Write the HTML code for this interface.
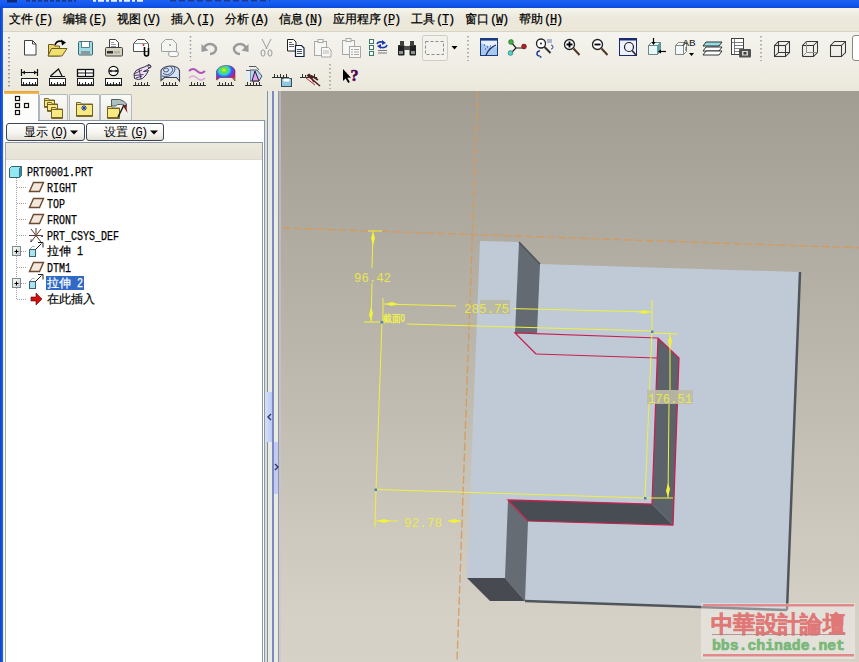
<!DOCTYPE html>
<html><head><meta charset="utf-8">
<style>
*{margin:0;padding:0;box-sizing:border-box}
html,body{width:859px;height:662px;overflow:hidden;background:#ece9d8;font-family:"Liberation Sans",sans-serif;}
.abs{position:absolute}
#title{left:0;top:0;width:859px;height:8px;background:linear-gradient(#1e62f2,#1258ee 60%,#0c4ad8);}
#lborder{left:0;top:8px;width:3px;height:654px;background:linear-gradient(90deg,#0a3fc4,#1858e0 60%,#2a64d8);}
#menubar{left:3px;top:8px;width:856px;height:24px;background:linear-gradient(#f6f5ee,#ece9dc 40%,#ebe8da);border-bottom:1px solid #d8d4c4;}
.mi{position:absolute;top:4px;font-size:12px;line-height:14px;color:#000;white-space:nowrap;-webkit-text-stroke:0.25px #000}
.mi u{text-decoration:underline}
.mi .hk{font-family:"Liberation Mono",monospace;font-size:12px;letter-spacing:-1.2px;margin-left:1px}
#toolbar{left:3px;top:32px;width:856px;height:59px;background:linear-gradient(#f4f3ed,#f0eee6 50%,#ebe8db);}
#viewport{left:278px;top:91px;width:581px;height:571px;background:linear-gradient(#a19d92,#d4d0c5 91%,#d6d2c7);}
#panel{left:4px;top:91px;width:274px;height:571px;background:#ece9d8;}
</style></head>
<body>
<div id="title" class="abs"></div>
<div id="lborder" class="abs"></div>
<svg class="abs tfrag" style="left:0;top:0" width="300" height="8"><rect x="7" y="0" width="10" height="2.5" fill="#0c2a78"/><path d="M26,0.8 h50" stroke="#1a3a90" stroke-width="2" stroke-dasharray="4,2"/><path d="M93,0.8 h50" stroke="#e8f0ff" stroke-width="1.8" stroke-dasharray="3,2,6,2"/><path d="M170,0.8 h100" stroke="#1a3a90" stroke-width="1.6" stroke-dasharray="6,3"/></svg>
<div id="menubar" class="abs">
 <span class="mi" style="left:6px">文件<span class="hk">(<u>F</u>)</span></span>
 <span class="mi" style="left:60px">编辑<span class="hk">(<u>E</u>)</span></span>
 <span class="mi" style="left:114px">视图<span class="hk">(<u>V</u>)</span></span>
 <span class="mi" style="left:168px">插入<span class="hk">(<u>I</u>)</span></span>
 <span class="mi" style="left:222px">分析<span class="hk">(<u>A</u>)</span></span>
 <span class="mi" style="left:276px">信息<span class="hk">(<u>N</u>)</span></span>
 <span class="mi" style="left:330px">应用程序<span class="hk">(<u>P</u>)</span></span>
 <span class="mi" style="left:408px">工具<span class="hk">(<u>T</u>)</span></span>
 <span class="mi" style="left:462px">窗口<span class="hk">(<u>W</u>)</span></span>
 <span class="mi" style="left:516px">帮助<span class="hk">(<u>H</u>)</span></span>
</div>
<div id="toolbar" class="abs"></div>
<div id="panel" class="abs"></div>
<div id="viewport" class="abs"></div>
<svg class="abs" style="left:0;top:0" width="859" height="92" viewBox="0 0 859 92"><path d="M9,37 v50" stroke="#8a8a8a" stroke-width="1.6" stroke-dasharray="1.6,2.4"/><path d="M190.5,36 V61" stroke="#9a9a9a" stroke-width="1.5" stroke-dasharray="1.5,2.5"/><path d="M468,36 V61" stroke="#9a9a9a" stroke-width="1.5" stroke-dasharray="1.5,2.5"/><path d="M761,36 V61" stroke="#9a9a9a" stroke-width="1.5" stroke-dasharray="1.5,2.5"/><path d="M330,64 V89" stroke="#9a9a9a" stroke-width="1.5" stroke-dasharray="1.5,2.5"/><path d="M24.5,40.5 h8 l3.5,3.5 v11 h-11.5z" fill="#fff" stroke="#404040"/><path d="M32.5,40.5 v3.5 h3.5" fill="none" stroke="#404040"/><path d="M48.5,44.5 h5 l1,1.5 h5 v10 h-11z" fill="#e8d468" stroke="#6a5a20"/><path d="M51.5,48.5 h15.5 l-5,7.5 h-14z" fill="#f0e070" stroke="#6a5a20"/><path d="M55,45 q2,-5 7,-3.5" fill="none" stroke="#000" stroke-width="1.6"/><path d="M61,39.5 l5,3 l-4,3z" fill="#000"/><rect x="78.5" y="41.5" width="14" height="13.5" fill="#9edce6" stroke="#3a6a70" rx="1"/><rect x="81.5" y="41.5" width="8" height="6" fill="#fff" stroke="#3a6a70" stroke-width="0.8"/><rect x="81" y="51" width="9" height="4" fill="#8a9a9a"/><path d="M109.5,39.5 h6 l3,3 v6 h-9z" fill="#fff" stroke="#404040"/><path d="M111,42.5 h3 M111,44.5 h5 M111,46.5 h5" stroke="#505050" stroke-width="0.6"/><rect x="105.5" y="47.5" width="17" height="8.5" fill="#d6d2c2" stroke="#404040" rx="1"/><rect x="107" y="51" width="6" height="2.5" fill="#303030"/><rect x="114" y="51" width="6" height="2.5" fill="#b8b4a4"/><path d="M133.5,43.5 l4,-4 h7 l4,4 v8 h-15z" fill="#fff" stroke="#505050"/><path d="M133.5,43.5 h15" stroke="#909090"/><circle cx="143.5" cy="45" r="1" fill="#d02020"/><path d="M144.5,47 v7 a2,2 0 0 0 4,0 v-6" fill="none" stroke="#000" stroke-width="1.6"/><path d="M161.5,43.5 l4,-4 h7 l4,4 v8 h-15z" fill="#f4f4f0" stroke="#a0a0a0"/><circle cx="170" cy="45" r="1" fill="#a0a0a0"/><rect x="168.5" y="51.5" width="10" height="5" rx="2.5" fill="#fafafa" stroke="#a0a0a0"/><path d="M204,49 a6,5 0 1 1 6,5" fill="none" stroke="#9a9a9a" stroke-width="2.5"/><path d="M201.5,44 l0,8 l7,-1.5z" fill="#9a9a9a"/><path d="M246,49 a6,5 0 1 0 -6,5" fill="none" stroke="#9a9a9a" stroke-width="2.5"/><path d="M248.5,44 l0,8 l-7,-1.5z" fill="#9a9a9a"/><path d="M262,39 l5,10 M271,39 l-5,10" stroke="#9a9a9a" stroke-width="1"/><ellipse cx="263" cy="53" rx="2" ry="3.2" fill="none" stroke="#9a9a9a"/><ellipse cx="270" cy="53" rx="2" ry="3.2" fill="none" stroke="#9a9a9a"/><path d="M287.5,39.5 h6 l2.5,2.5 v9 h-8.5z" fill="#fff" stroke="#202020"/><path d="M289,42.5 h3 M289,44.5 h5 M289,46.5 h5" stroke="#202020" stroke-width="0.7"/><path d="M295.5,45.5 h6 l2.5,2.5 v8.5 h-8.5z" fill="#fff" stroke="#102040" stroke-width="1.2"/><path d="M297,49.5 h5 M297,51.5 h5 M297,53.5 h5" stroke="#102040" stroke-width="0.8"/><rect x="314.5" y="41.5" width="12" height="14" fill="#f6f6f2" stroke="#a8a8a8"/><rect x="318" y="39.5" width="5" height="3" fill="#f6f6f2" stroke="#a8a8a8"/><path d="M321.5,47.5 h7 l2.5,2.5 v7 h-9.5z" fill="#f8f8f4" stroke="#a8a8a8"/><path d="M323,51 h6 M323,53 h6" stroke="#a8a8a8" stroke-width="0.8"/><rect x="342.5" y="40.5" width="12" height="14" fill="#f6f6f2" stroke="#a8a8a8"/><rect x="346" y="38.5" width="5" height="3" fill="#f6f6f2" stroke="#a8a8a8"/><rect x="349.5" y="46.5" width="11" height="11" fill="#f8f8f4" stroke="#a8a8a8"/><path d="M351,49.5 h2 M354,49.5 h5 M351,52 h2 M354,52 h5 M351,54.5 h2 M354,54.5 h5" stroke="#a8a8a8" stroke-width="1"/><rect x="369.5" y="39.5" width="4" height="4" fill="#fff" stroke="#3a7a6a"/><rect x="369.5" y="45.5" width="4" height="4" fill="#fff" stroke="#3a7a6a"/><rect x="369.5" y="51.5" width="4" height="4" fill="#fff" stroke="#3a7a6a"/><path d="M377,44 a4,3 0 0 1 7,-1" fill="none" stroke="#1a3ab0" stroke-width="1.6"/><path d="M382,40 l4,3 l-4,2z" fill="#1a3ab0"/><path d="M387,45 a4,3 0 0 1 -7,1.5" fill="none" stroke="#1a3ab0" stroke-width="1.6"/><path d="M381,49 l-4,-3 l4,-2z" fill="#1a3ab0"/><path d="M378,50.5 h9 M378,53 h9" stroke="#6a6a6a" stroke-width="0.9"/><rect x="398" y="45" width="6.5" height="10.5" rx="1" fill="#202020"/><rect x="409.5" y="45" width="6.5" height="10.5" rx="1" fill="#202020"/><rect x="400" y="41" width="4" height="5" fill="#404040"/><rect x="410" y="41" width="4" height="5" fill="#404040"/><rect x="404" y="46" width="6" height="4" fill="#505050"/><rect x="399" y="51" width="4" height="3" fill="#909090"/><rect x="411" y="51" width="4" height="3" fill="#909090"/><rect x="422.5" y="35.5" width="25" height="25" rx="2" fill="#f3f2ec" stroke="#cfccc0"/><rect x="425.5" y="41.5" width="18" height="13" fill="none" stroke="#8a8a8a" stroke-width="1" stroke-dasharray="3,2"/><path d="M451.5,46 h6 l-3,3.5z" fill="#000"/><rect x="480.5" y="38.5" width="17" height="17" fill="#a8c8f0" stroke="#1a3a80"/><rect x="480" y="38" width="18" height="2.5" fill="#1a3a80"/><path d="M481,41 h16 v6 q-6,1 -16,-4z" fill="#e8f0ff"/><path d="M486,55 q3,-7 10,-10" fill="none" stroke="#1a2a60" stroke-width="1.3"/><path d="M484,45 h1 M487,47 h1 M485,49 h1 M489,49 h1 M490,46 h1" stroke="#304070" stroke-width="1"/><path d="M511,42 l5,6 h9 M511,53 l5,-5" fill="none" stroke="#202020" stroke-width="1.2"/><circle cx="511" cy="42" r="2.4" fill="#40b040" stroke="#206020" stroke-width="0.6"/><circle cx="510.5" cy="53" r="2.4" fill="#50d0c8" stroke="#207070" stroke-width="0.6"/><circle cx="524" cy="46.5" r="2.4" fill="#b02020" stroke="#601010" stroke-width="0.6"/><circle cx="541" cy="43.5" r="4.5" fill="#fff" stroke="#202020" stroke-width="1.3"/><circle cx="541" cy="43.5" r="1" fill="#202020"/><path d="M544.5,47 l6,6" stroke="#303030" stroke-width="2"/><path d="M547,40 h5 M547,42 h5" stroke="#4060a0" stroke-width="0.8"/><path d="M551,45 a2,2 0 0 1 0,4" fill="none" stroke="#304080" stroke-width="1"/><path d="M539,56 a2.5,2.5 0 0 1 1,-5" fill="none" stroke="#1a3090" stroke-width="1.4"/><path d="M539,55 l3,2 l-2,1z" fill="#1a3090"/><circle cx="569.5" cy="44.5" r="5" fill="#fff" stroke="#202020" stroke-width="1.3"/><path d="M566.5,44.5 h6 M569.5,41.5 v6" stroke="#000" stroke-width="1.8"/><path d="M573.5,48.5 l6,6.5" stroke="#503828" stroke-width="2"/><circle cx="597.5" cy="44.5" r="5" fill="#fff" stroke="#202020" stroke-width="1.3"/><path d="M594.5,44.5 h6" stroke="#000" stroke-width="1.8"/><path d="M601.5,48.5 l6,6.5" stroke="#503828" stroke-width="2"/><rect x="619.5" y="38.5" width="17" height="17" fill="#eef2ff" stroke="#1a2a70"/><rect x="619" y="38" width="18" height="2.5" fill="#1a2a70"/><circle cx="629" cy="47" r="4.5" fill="none" stroke="#202020" stroke-width="1.2"/><path d="M632,50.5 l4,4.5" stroke="#303030" stroke-width="1.8"/><path d="M648.5,45.5 l3,-3 h9 v9 l-3,3 h-9z" fill="#e8f8f8" stroke="#506868" stroke-width="0.8"/><path d="M648.5,45.5 h9 v9 M657.5,45.5 l3,-3" fill="none" stroke="#506868" stroke-width="0.8"/><path d="M657.5,45.5 l3,-3 v9 l-3,3z" fill="#58a8a8"/><path d="M653.5,38 v6" stroke="#000" stroke-width="1.2"/><path d="M651.5,42 l2,3 l2,-3z" fill="#000"/><path d="M666,51.5 h-6" stroke="#000" stroke-width="1.2"/><path d="M661,49.5 l-3,2 l3,2z" fill="#000"/><path d="M675.5,45.5 l3,-3 h8 v9 l-3,3 h-8z" fill="#f4f8f8" stroke="#607070" stroke-width="0.8"/><path d="M675.5,45.5 h8 v9 M683.5,45.5 l3,-3" fill="none" stroke="#607070" stroke-width="0.8"/><text x="682.5" y="46" font-family="Liberation Mono, monospace" font-size="9.5" fill="#202020" textLength="13" lengthAdjust="spacingAndGlyphs">AB</text><path d="M689,53 h5 l-2.5,3z" fill="#000"/><path d="M686,47 v4" stroke="#606060"/><path d="M706,42 h16 l-3,4 h-16z" fill="#90e0e8" stroke="#202020" stroke-width="0.9"/><path d="M706,47 h16 l-3,4 h-16z" fill="#fff" stroke="#202020" stroke-width="0.9"/><path d="M706,51 h16 l-3,4 h-16z" fill="#fff" stroke="#202020" stroke-width="0.9"/><rect x="731.5" y="38.5" width="12" height="16" fill="#fff" stroke="#404040"/><path d="M731.5,42.5 h12 M734.5,38.5 v16 M734,45.5 h9 M734,48.5 h9 M734,51.5 h9" stroke="#606060" stroke-width="0.8"/><rect x="739" y="49" width="12" height="8.5" rx="1" fill="#505050"/><rect x="742" y="51" width="6" height="4.5" fill="#d8d8d8"/><rect x="743.5" y="52" width="3" height="2.5" fill="#404040"/><g fill="none" stroke="#383838" stroke-width="1.05"><rect x="774.5" y="45.5" width="11" height="11"/><path d="M774.5,45.5 l4,-4 h11 v11 l-4,4 M785.5,45.5 l4,-4"/><path d="M778.5,41.5 v11 h11 M778.5,52.5 l-4,4"/></g><g fill="none" stroke="#383838" stroke-width="1.05"><rect x="802.5" y="45.5" width="11" height="11"/><path d="M802.5,45.5 l4,-4 h11 v11 l-4,4 M813.5,45.5 l4,-4"/><path d="M806.5,41.5 v11 h11 M806.5,52.5 l-4,4" stroke="#909090" stroke-width="1"/></g><g fill="none" stroke="#383838" stroke-width="1.05"><rect x="830.5" y="45.5" width="11" height="11"/><path d="M830.5,45.5 l4,-4 h11 v11 l-4,4 M841.5,45.5 l4,-4"/></g><rect x="852.5" y="35.5" width="12" height="25" rx="2.5" fill="#fff" stroke="#8a8a80"/><path d="M21.5,69 v7 M37.5,69 v7 M22,72.5 h15" stroke="#101010" stroke-width="1.2" fill="none"/><path d="M22,72.5 l3,-2 v4z M37,72.5 l-3,-2 v4z" fill="#101010"/><rect x="21.5" y="78.5" width="16" height="7" fill="#ffffff" stroke="#202020" stroke-width="1"/><path d="M22,85 h16" stroke="#202020" stroke-width="1.5"/><path d="M23.5,85 v-3 M26.5,85 v-2 M29.5,85 v-3 M32.5,85 v-2 M35.5,85 v-3 " stroke="#202020" stroke-width="1"/><path d="M50,76.5 h15 M50.5,76 l8,-7 l3.5,7" stroke="#101010" stroke-width="1.2" fill="none"/><rect x="49.5" y="78.5" width="16" height="7" fill="#ffffff" stroke="#202020" stroke-width="1"/><path d="M50,85 h16" stroke="#202020" stroke-width="1.5"/><path d="M51.5,85 v-3 M54.5,85 v-2 M57.5,85 v-3 M60.5,85 v-2 M63.5,85 v-3 " stroke="#202020" stroke-width="1"/><rect x="77.5" y="69.5" width="16" height="7" fill="#fff" stroke="#101010" stroke-width="1.3"/><path d="M85.5,69.5 v7 M78,73 h15" stroke="#101010" stroke-width="1"/><rect x="77.5" y="78.5" width="16" height="7" fill="#ffffff" stroke="#202020" stroke-width="1"/><path d="M78,85 h16" stroke="#202020" stroke-width="1.5"/><path d="M79.5,85 v-3 M82.5,85 v-2 M85.5,85 v-3 M88.5,85 v-2 M91.5,85 v-3 " stroke="#202020" stroke-width="1"/><circle cx="113.5" cy="71" r="4.6" fill="#fff" stroke="#101010" stroke-width="1.3"/><path d="M109,71 h9" stroke="#101010" stroke-width="1.2"/><path d="M109.5,71 l2,-1.5 v3z M117.5,71 l-2,-1.5 v3z" fill="#101010"/><rect x="105.5" y="78.5" width="16" height="7" fill="#ffffff" stroke="#202020" stroke-width="1"/><path d="M106,85 h16" stroke="#202020" stroke-width="1.5"/><path d="M107.5,85 v-3 M110.5,85 v-2 M113.5,85 v-3 M116.5,85 v-2 M119.5,85 v-3 " stroke="#202020" stroke-width="1"/><path d="M134,74 q1,-4 6,-5.5 q5,-1.5 9,-4 l1.5,2 q-3,4 -7,5 q3,0 5,-1 q-2,5 -6,8 q-4,2 -8,0z" fill="#f4dcf4" stroke="#1e2040" stroke-width="0.9"/><path d="M134,74 l8,-4 M134.5,75.5 l9,-1 M136,78 l6,-2 M139,69 l2,10" fill="none" stroke="#1e2040" stroke-width="0.8"/><circle cx="149.5" cy="66.5" r="1.5" fill="none" stroke="#1e2040" stroke-width="0.8"/><path d="M133,85.5 h17" stroke="#303030" stroke-width="1"/><path d="M135.5,85 v-3 M138.5,85 v-2 M141.5,85 v-3 M144.5,85 v-2 M147.5,85 v-3 " stroke="#303030" stroke-width="1"/><path d="M161,80.5 v-10 q2,-4 9,-4.5 q8,0 9.5,4.5 v10.5 l-3,-3.5 h-12z" fill="#d4e2f8" stroke="#3a4250" stroke-width="1.1"/><ellipse cx="166" cy="70" rx="2.5" ry="2" fill="none" stroke="#3a4a70" stroke-width="0.9"/><path d="M163,73 q4,4 9,-1 q2,-3 -1,-5 M162,76 q8,2 12,-4 q2,-3 0,-5.5" fill="none" stroke="#3a4a70" stroke-width="0.9"/><path d="M161,85.5 h17" stroke="#303030" stroke-width="1"/><path d="M163.5,85 v-3 M166.5,85 v-2 M169.5,85 v-3 M172.5,85 v-2 M175.5,85 v-3 " stroke="#303030" stroke-width="1"/><path d="M189,71 q4,-4 8,0 t8,0" fill="none" stroke="#b050c0" stroke-width="1.8"/><path d="M189,78 q4,-4 8,0 t8,0" fill="none" stroke="#d8a8e0" stroke-width="1.5"/><path d="M189,85.5 h17" stroke="#303030" stroke-width="1"/><path d="M191.5,85 v-3 M194.5,85 v-2 M197.5,85 v-3 M200.5,85 v-2 M203.5,85 v-3 " stroke="#303030" stroke-width="1"/><defs><radialGradient id="rb" cx="0.4" cy="0.3" r="0.85"><stop offset="0" stop-color="#f0f020"/><stop offset="0.18" stop-color="#60e040"/><stop offset="0.35" stop-color="#30d0e0"/><stop offset="0.5" stop-color="#3060f0"/><stop offset="0.65" stop-color="#a020d0"/><stop offset="0.8" stop-color="#e02030"/><stop offset="1" stop-color="#f0a020"/></radialGradient></defs><path d="M216.5,80 v-9 q2,-5 9,-5.5 q8,0 9.5,5 v10.5 l-3,-3.5 h-12z" fill="url(#rb)" stroke="#503050" stroke-width="0.6"/><path d="M217,85.5 h17" stroke="#303030" stroke-width="1"/><path d="M219.5,85 v-3 M222.5,85 v-2 M225.5,85 v-3 M228.5,85 v-2 M231.5,85 v-3 " stroke="#303030" stroke-width="1"/><path d="M250,70 h7 l5,6 l-3,5 h-9z" fill="#b8d4f0" stroke="#404858" stroke-width="0.9"/><rect x="247" y="70" width="3" height="11" fill="#e0f0f8"/><path d="M252,81 l3,-10 l4,10z" fill="#e8a0f0" stroke="#202030" stroke-width="1"/><path d="M249,66.5 h7 l3,3.5 M246,70.5 h4" fill="none" stroke="#404858" stroke-width="0.9"/><path d="M245,85.5 h17" stroke="#303030" stroke-width="1"/><path d="M247.5,85 v-3 M250.5,85 v-2 M253.5,85 v-3 M256.5,85 v-2 M259.5,85 v-3 " stroke="#303030" stroke-width="1"/><path d="M272,77.5 h17" stroke="#303030" stroke-width="1"/><path d="M274.5,77 v-3 M277.5,77 v-2 M280.5,77 v-3 M283.5,77 v-2 M286.5,77 v-3 " stroke="#303030" stroke-width="1"/><rect x="281.5" y="78.5" width="10" height="8" fill="#90c8e0" stroke="#305060"/><rect x="283.5" y="78.5" width="6" height="3" fill="#fff"/><path d="M300,77.5 h17" stroke="#303030" stroke-width="1"/><path d="M302.5,77 v-3 M305.5,77 v-2 M308.5,77 v-3 M311.5,77 v-2 M314.5,77 v-3 " stroke="#303030" stroke-width="1"/><path d="M307,75 l13,11 M309,74 l5,8 M312,76 l6,4" stroke="#502020" stroke-width="1.6"/><path d="M306,78 l9,7" stroke="#c02040" stroke-width="1"/><path d="M343,69 v12 l2.6,-2.6 l2.6,4.6 l1.6,-0.9 l-2.5,-4.4 h3.7z" fill="#000"/><text x="350.5" y="81" font-family="Liberation Serif, serif" font-size="16" font-weight="bold" fill="#480048" stroke="#480048" stroke-width="0.5">?</text></svg>
<div class="abs" style="left:4px;top:91px;width:274px;height:571px;background:#ece9d8"></div>
<div class="abs" style="left:3px;top:91px;width:36px;height:30px;background:#fcfcfa;border-right:1px solid #a8b4c0;"></div>
<div class="abs" style="left:4px;top:91px;width:35px;height:3px;background:linear-gradient(#e8a030,#f0c060)"></div>
<div class="abs" style="left:39px;top:94px;width:29px;height:26px;background:linear-gradient(#fafaf7,#ecebe4);border:1px solid #b0b8c0;border-bottom:none;border-radius:2px 2px 0 0"></div>
<div class="abs" style="left:69px;top:94px;width:31px;height:26px;background:linear-gradient(#fafaf7,#ecebe4);border:1px solid #b0b8c0;border-bottom:none;border-radius:2px 2px 0 0"></div>
<div class="abs" style="left:100px;top:94px;width:32px;height:26px;background:linear-gradient(#fafaf7,#ecebe4);border:1px solid #b0b8c0;border-bottom:none;border-radius:2px 2px 0 0"></div>
<div class="abs" style="left:4px;top:120px;width:261px;height:542px;background:#fff;"></div>
<div class="abs" style="left:38px;top:120px;width:227px;height:1px;background:#8a98a8"></div>
<div class="abs" style="left:264px;top:120px;width:1px;height:542px;background:#8a98a8"></div>
<div class="abs" style="left:6px;top:123px;width:79px;height:18px;border:1px solid #3a4656;border-radius:3px;background:linear-gradient(#ffffff,#f4f3ee 60%,#e2e0d6);"></div>
<div class="abs" style="left:86px;top:123px;width:78px;height:18px;border:1px solid #3a4656;border-radius:3px;background:linear-gradient(#ffffff,#f4f3ee 60%,#e2e0d6);"></div>
<div class="abs" style="left:24px;top:125px;font-size:12px;line-height:14px;white-space:nowrap">显示<span style="font-family:'Liberation Mono',monospace;font-size:12px;letter-spacing:-1.7px;margin-left:2px">(<u>O</u>)</span></div>
<div class="abs" style="left:104px;top:125px;font-size:12px;line-height:14px;white-space:nowrap">设置<span style="font-family:'Liberation Mono',monospace;font-size:12px;letter-spacing:-1.7px;margin-left:2px">(<u>G</u>)</span></div>
<div class="abs" style="left:5px;top:142px;width:258px;height:520px;border-left:1px solid #9aa6b0;border-top:1px solid #8a98a8;border-right:1px solid #8a98a8"></div>
<div class="abs" style="left:6px;top:143px;width:256px;height:17px;background:linear-gradient(#ece9dd,#e6e3d6);border-bottom:1px solid #dcdad0"></div>
<div class="abs" style="left:265px;top:91px;width:14px;height:571px;background:#e8ebe4"></div>
<div class="abs" style="left:265px;top:120px;width:2px;height:542px;background:#d8dce4"></div>
<div class="abs" style="left:267px;top:91px;width:1px;height:571px;background:#8a9090"></div>
<div class="abs" style="left:272px;top:91px;width:2px;height:571px;background:#8088c4"></div>
<div class="abs" style="left:274px;top:91px;width:4px;height:571px;background:#e6eedf"></div>
<div class="abs" style="left:278px;top:91px;width:1px;height:571px;background:#9890a8"></div>
<div class="abs" style="left:279px;top:91px;width:2px;height:571px;background:#c8c4d4;opacity:0.6"></div>
<div class="abs" style="left:265px;top:392px;width:7px;height:50px;background:linear-gradient(90deg,#d8e0f8,#bccaf2)"></div>
<div class="abs" style="left:274px;top:442px;width:4px;height:52px;background:#c0ccf2"></div>
<svg class="abs" style="left:260px;top:380px" width="20" height="120"><path d="M11,34 l-3,3 l3,3" fill="none" stroke="#2a3a70" stroke-width="1.4"/><path d="M15,84 l3,3 l-3,3" fill="none" stroke="#2a3a70" stroke-width="1.4"/></svg>
<svg class="abs" style="left:0;top:0" width="280" height="320"><defs><linearGradient id="bx" x1="0" y1="0" x2="1" y2="1"><stop offset="0" stop-color="#fff"/><stop offset="1" stop-color="#c8ccc8"/></linearGradient></defs><g fill="#fff" stroke="#101010" stroke-width="1.2"><rect x="15.5" y="96.5" width="4" height="4"/><rect x="15.5" y="103.5" width="4" height="4"/><rect x="24.5" y="103.5" width="4" height="4"/><rect x="15.5" y="110.5" width="4" height="4"/></g><path d="M44.5,98.5 h4 l1,1.5 h5 v7.5 h-10z" fill="#f0e488" stroke="#6a5a20" stroke-width="0.9"/><rect x="44.5" y="100.5" width="10" height="6" fill="#f6ea80" stroke="#6a5a20" stroke-width="0.9"/><path d="M47.5,102.5 h4 l1,1.5 h5 v7.5 h-10z" fill="#f0e488" stroke="#6a5a20" stroke-width="0.9"/><rect x="47.5" y="104.5" width="10" height="6" fill="#f6ea80" stroke="#6a5a20" stroke-width="0.9"/><path d="M51.5,107.5 h4 l1,1.5 h6 v9.5 h-11z" fill="#f0e488" stroke="#6a5a20" stroke-width="0.9"/><rect x="51.5" y="109.5" width="11" height="8" fill="#f6ea80" stroke="#6a5a20" stroke-width="0.9"/><path d="M76.5,102.5 h4 l1,1.5 h11 v12.5 h-16z" fill="#f0e488" stroke="#6a5a20" stroke-width="0.9"/><rect x="76.5" y="104.5" width="16" height="11" fill="#f6ea80" stroke="#6a5a20" stroke-width="0.9"/><path d="M84,105 v6 M81,108 h6 M82,106 l4,4 M86,106 l-4,4" stroke="#1a3ab0" stroke-width="1"/><path d="M107.5,106.5 h4 l1,1.5 h7 v10.5 h-12z" fill="#f0e488" stroke="#6a5a20" stroke-width="0.9"/><rect x="107.5" y="108.5" width="12" height="9" fill="#f6ea80" stroke="#6a5a20" stroke-width="0.9"/><path d="M111.5,99.5 h8 l4,1.5 l3,3 v3 l-3,-2 l-3,-0.5 h-3 l-2,1.5 h-4z" fill="#b0c0c0" stroke="#405050" stroke-width="0.9"/><path d="M118,117 l6,-12" stroke="#202020" stroke-width="1.6"/><path d="M123,106 l3,-1.5 l1.5,8.5z" fill="#802020"/><path d="M70,130.5 h8 l-4,4z" fill="#000"/><path d="M150,130.5 h8 l-4,4z" fill="#000"/><path d="M16.5,178 V299" stroke="#a0a0a0" stroke-width="1" stroke-dasharray="1,1"/><path d="M17,187.5 H27" stroke="#a0a0a0" stroke-width="1" stroke-dasharray="1,1"/><path d="M17,203.5 H27" stroke="#a0a0a0" stroke-width="1" stroke-dasharray="1,1"/><path d="M17,219.5 H27" stroke="#a0a0a0" stroke-width="1" stroke-dasharray="1,1"/><path d="M17,235.5 H27" stroke="#a0a0a0" stroke-width="1" stroke-dasharray="1,1"/><path d="M17,267.5 H27" stroke="#a0a0a0" stroke-width="1" stroke-dasharray="1,1"/><path d="M17,299.5 H27" stroke="#a0a0a0" stroke-width="1" stroke-dasharray="1,1"/><path d="M21,251.5 H27" stroke="#a0a0a0" stroke-width="1" stroke-dasharray="1,1"/><rect x="12.5" y="246.5" width="8" height="9" fill="url(#bx)" stroke="#7a8a90" stroke-width="1"/><path d="M14.5,251.5 h4 M16.5,249.5 v4" stroke="#000" stroke-width="1"/><path d="M21,283.5 H27" stroke="#a0a0a0" stroke-width="1" stroke-dasharray="1,1"/><rect x="12.5" y="278.5" width="8" height="9" fill="url(#bx)" stroke="#7a8a90" stroke-width="1"/><path d="M14.5,283.5 h4 M16.5,281.5 v4" stroke="#000" stroke-width="1"/><path d="M9.5,168.5 l2,-2 h10 v9 l-2,2 h-10z" fill="#90e8f0" stroke="#3a6070" stroke-width="1"/><path d="M19.5,168.5 v9 M19.5,168.5 l2,-2" stroke="#3a6070" stroke-width="1"/><path d="M19.5,168.5 l2,-2 v9 l-2,2z" fill="#3a8898"/><path d="M29.5,191.5 l4,-9 h10 l-4,9z" fill="#f4e8dc" stroke="#6a4a30" stroke-width="1.4"/><path d="M29.5,207.5 l4,-9 h10 l-4,9z" fill="#f4e8dc" stroke="#6a4a30" stroke-width="1.4"/><path d="M29.5,223.5 l4,-9 h10 l-4,9z" fill="#f4e8dc" stroke="#6a4a30" stroke-width="1.4"/><path d="M29.5,271.5 l4,-9 h10 l-4,9z" fill="#f4e8dc" stroke="#6a4a30" stroke-width="1.4"/><path d="M29,235.5 h14 M31,229 l10,13 M41,229 l-10,13 M36,228 v6" stroke="#5a3a2a" stroke-width="1"/><path d="M41,237 l2,-2 M41,235 l2,2" stroke="#5a5a6a" stroke-width="1"/><path d="M30,242 l2,-2 h-2" stroke="#5a5a6a" stroke-width="0.8" fill="none"/><rect x="29.5" y="249.5" width="6" height="7" fill="#a8e4ec" stroke="#3a6070" stroke-width="1"/><path d="M35.5,249.5 l6,-6 M38,242.5 h5 v5" fill="none" stroke="#202020" stroke-width="1"/><path d="M29.5,249.5 l3,-3 h2" stroke="#909090" stroke-width="0.8" fill="none"/><rect x="29.5" y="281.5" width="6" height="7" fill="#a8e4ec" stroke="#3a6070" stroke-width="1"/><path d="M35.5,281.5 l6,-6 M38,274.5 h5 v5" fill="none" stroke="#202020" stroke-width="1"/><path d="M29.5,281.5 l3,-3 h2" stroke="#909090" stroke-width="0.8" fill="none"/><path d="M31,297 h5 v-4 l6,6 l-6,6 v-4 h-5z" fill="#d01010" stroke="#600000" stroke-width="0.6"/></svg>
<div class="abs" style="left:46px;top:276px;width:38px;height:14px;background:#316ac5"></div>
<div class="abs" style="left:27px;top:167px;line-height:12px;color:#000;font-family:'Liberation Mono',monospace;font-size:12px;-webkit-text-stroke:0.25px currentColor;display:inline-block;transform:scaleX(0.8333);transform-origin:0 0;white-space:nowrap">PRT0001.PRT</div>
<div class="abs" style="left:47px;top:183px;line-height:12px;color:#000;font-family:'Liberation Mono',monospace;font-size:12px;-webkit-text-stroke:0.25px currentColor;display:inline-block;transform:scaleX(0.8333);transform-origin:0 0;white-space:nowrap">RIGHT</div>
<div class="abs" style="left:47px;top:199px;line-height:12px;color:#000;font-family:'Liberation Mono',monospace;font-size:12px;-webkit-text-stroke:0.25px currentColor;display:inline-block;transform:scaleX(0.8333);transform-origin:0 0;white-space:nowrap">TOP</div>
<div class="abs" style="left:47px;top:215px;line-height:12px;color:#000;font-family:'Liberation Mono',monospace;font-size:12px;-webkit-text-stroke:0.25px currentColor;display:inline-block;transform:scaleX(0.8333);transform-origin:0 0;white-space:nowrap">FRONT</div>
<div class="abs" style="left:47px;top:231px;line-height:12px;color:#000;font-family:'Liberation Mono',monospace;font-size:12px;-webkit-text-stroke:0.25px currentColor;display:inline-block;transform:scaleX(0.8333);transform-origin:0 0;white-space:nowrap">PRT_CSYS_DEF</div>
<div class="abs" style="left:47px;top:263px;line-height:12px;color:#000;font-family:'Liberation Mono',monospace;font-size:12px;-webkit-text-stroke:0.25px currentColor;display:inline-block;transform:scaleX(0.8333);transform-origin:0 0;white-space:nowrap">DTM1</div>
<div class="abs" style="left:47px;top:245px;font-size:12px;line-height:12px;color:#000;white-space:nowrap;-webkit-text-stroke:0.2px currentColor">拉伸</div>
<div class="abs" style="left:77px;top:246px;line-height:12px;color:#000;font-family:'Liberation Mono',monospace;font-size:12px;-webkit-text-stroke:0.25px currentColor;display:inline-block;transform:scaleX(0.8333);transform-origin:0 0;white-space:nowrap">1</div>
<div class="abs" style="left:47px;top:277px;font-size:12px;line-height:12px;color:#fff;white-space:nowrap;-webkit-text-stroke:0.2px currentColor">拉伸</div>
<div class="abs" style="left:77px;top:278px;line-height:12px;color:#fff;font-family:'Liberation Mono',monospace;font-size:12px;-webkit-text-stroke:0.25px currentColor;display:inline-block;transform:scaleX(0.8333);transform-origin:0 0;white-space:nowrap">2</div>
<div class="abs" style="left:47px;top:293px;font-size:12px;line-height:12px;color:#000;white-space:nowrap;-webkit-text-stroke:0.2px currentColor">在此插入</div>
<svg class="abs" style="left:0;top:0" width="859" height="662" viewBox="0 0 859 662">
<defs><clipPath id="vc"><rect x="278" y="91" width="581" height="571"/></clipPath></defs>
<g clip-path="url(#vc)">
<!-- orange dashed datum lines -->
<line x1="283" y1="228" x2="859" y2="247.8" stroke="#d89a58" stroke-width="1.35" stroke-dasharray="8,3" opacity="0.9"/>
<line x1="477.5" y1="91" x2="457" y2="662" stroke="#d89a58" stroke-width="1.35" stroke-dasharray="8,3" opacity="0.9"/>
<!-- model -->
<polygon points="480,241 519,242 540,264 800,272 787,610 525,601 505,578 467,578" fill="#bfcad6"/>
<polygon points="519,242 540,264 537,333 515,333" fill="#646a72"/>
<line x1="519" y1="242" x2="540" y2="264" stroke="#4e535a" stroke-width="1.5"/>
<polygon points="658,338 679,358 673,525 652,504" fill="#5c626a"/>
<polygon points="508,500 652,504 673,525 528,521" fill="#484c53"/>
<polygon points="508,500 528,521 525,601 505,578" fill="#656c74"/>
<polygon points="467,578 505,578 525,601 490,601" fill="#474b51"/>
<line x1="800" y1="272" x2="787" y2="610" stroke="#4f555b" stroke-width="2.5"/>
<line x1="525" y1="601" x2="787" y2="610" stroke="#4f555b" stroke-width="2.5"/>
<!-- red outlines -->
<g fill="none" stroke="#c8204e" stroke-width="1.25">
<polyline points="536,354 515,333 658,338 679,358 673,525 528,521 508,500 652,504 658,338"/>
<polyline points="536,354 657,358"/>
</g>
<!-- yellow annotations -->
<g stroke="#f0f040" stroke-width="1" fill="none">
<line x1="368" y1="231" x2="382" y2="231"/>
<line x1="373" y1="231" x2="372" y2="268"/>
<line x1="372" y1="283" x2="371" y2="322"/>
<line x1="364" y1="322" x2="382" y2="322"/>
<line x1="383" y1="298" x2="383" y2="322"/>
<polyline points="382,322 376,489.5 375,527"/>
<line x1="384" y1="304" x2="456" y2="306"/>
<line x1="513" y1="308.6" x2="652" y2="312"/>
<line x1="407" y1="324" x2="652" y2="331"/>
<line x1="652" y1="300" x2="652" y2="331"/>
<line x1="652" y1="331" x2="645" y2="498"/>
<line x1="652" y1="333" x2="678" y2="334"/>
<line x1="670" y1="334" x2="670" y2="390"/>
<line x1="669" y1="404" x2="668" y2="498"/>
<line x1="376" y1="489.5" x2="645" y2="498"/>
<line x1="645" y1="498" x2="673" y2="498"/>
<line x1="376" y1="521" x2="398" y2="521"/>
<line x1="448" y1="521" x2="461" y2="521"/>
</g>
<g fill="#f2f23a">
<path d="M373,232 l-2,6 l2,8 l2,-8z"/>
<path d="M371,321 l-2,-6 l2,-8 l2,6z"/>
<path d="M385,304 l7,-2 l6,2 l-6,2z"/>
<path d="M651,312 l-7,-2 l-6,2 l6,2z"/>
<path d="M670,335 l-2,6 l2,8 l2,-8z"/>
<path d="M668,497 l-2,-6 l2,-8 l2,6z"/>
<path d="M377,521 l7,-2 l6,2 l-6,2z"/>
<path d="M461,521 l-7,-2 l-6,2 l6,2z"/>
</g>
<rect x="480" y="300" width="30" height="14" fill="#b9b8a6" opacity="0.9"/>
<rect x="647" y="390" width="46" height="14" fill="#bdbca8" opacity="0.9"/>
<g font-family="Liberation Mono, monospace" font-size="12" fill="#f0f040" opacity="0.85">
<text x="354" y="282" textLength="37" lengthAdjust="spacingAndGlyphs">96.42</text>
<text x="464" y="313" textLength="45" lengthAdjust="spacingAndGlyphs">285.75</text>
<text x="648" y="403" textLength="44" lengthAdjust="spacingAndGlyphs">176.51</text>
<text x="404" y="527" textLength="38" lengthAdjust="spacingAndGlyphs">92.78</text>
</g>
<text x="383" y="322" font-size="10" font-weight="bold" fill="#f0f050" font-family="Liberation Sans, sans-serif" textLength="22" lengthAdjust="spacingAndGlyphs">截面0</text>
<g fill="#4a80b8">
<rect x="380.5" y="321" width="2.5" height="2.5"/>
<rect x="651" y="330.5" width="2.5" height="2.5"/>
<rect x="644" y="497" width="2.5" height="2.5"/>
<rect x="374.5" y="488.5" width="2.5" height="2.5"/>
</g>
</g>
<g>
<rect x="701" y="603" width="154" height="56" fill="#ffffff" opacity="0.35"/>
<rect x="703" y="604" width="151" height="2.5" fill="#e08a8a"/>
<rect x="703" y="654" width="151" height="2.5" fill="#e08a8a"/>
<text x="711" y="632" font-size="22.5" font-weight="900" fill="#e07878" stroke="#e07878" stroke-width="0.6" textLength="134" lengthAdjust="spacingAndGlyphs">中華設計論壇</text>
<rect x="712" y="634" width="133" height="1" fill="#b08080" opacity="0.8"/>
<text x="712" y="650" font-family="Liberation Mono, monospace" font-size="15" font-weight="bold" fill="#78b878" stroke="#78b878" stroke-width="0.7" textLength="133" lengthAdjust="spacingAndGlyphs">bbs.chinade.net</text>
</g>
</svg>

</body></html>
